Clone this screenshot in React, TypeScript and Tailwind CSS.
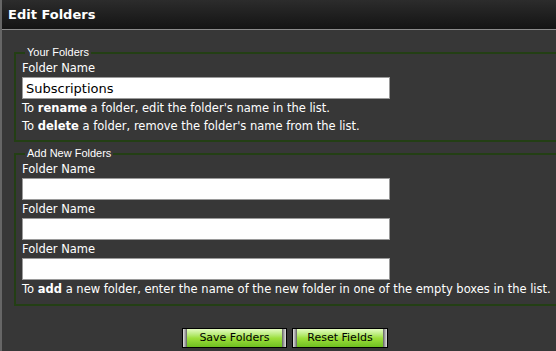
import React from 'react';

const body = { fontFamily: '"DejaVu Sans", Verdana, sans-serif' };
const small = { fontFamily: 'Tahoma, "Liberation Sans", Arial, sans-serif' };

function NameField({ value = '' }: { value?: string }) {
  return (
    <div>
      <div className="h-[18px] leading-[18px] text-[11.5px] text-white">Folder Name</div>
      <input
        defaultValue={value}
        className="block w-[368px] h-[22px] bg-white border border-[#9a9a9a] px-[3px] text-[13px] text-black outline-none"
        style={body}
      />
    </div>
  );
}

function GreenButton({ label, width }: { label: string; width: string }) {
  return (
    <button
      className={`flex h-[20px] ${width} border border-black bg-black p-0`}
      style={body}
    >
      <span className="w-[4px] h-full bg-gradient-to-r from-[#e0e0e0] via-[#a8a8a8] to-[#606060]" />
      <span className="flex-1 h-full flex items-center justify-center text-[11px] text-black bg-gradient-to-b from-[#e4fbc0] via-[#9ee03c] to-[#6fc020]">
        {label}
      </span>
      <span className="w-[4px] h-full bg-gradient-to-r from-[#606060] via-[#a8a8a8] to-[#e0e0e0]" />
    </button>
  );
}

export default function App() {
  return (
    <div className="w-[556px] h-[351px] overflow-hidden bg-[#373737] border-l-2 border-[#666666]" style={body}>
      {/* title bar */}
      <div className="h-[30px] flex items-center px-[6px] bg-gradient-to-b from-[#2c2c2c] to-[#141414] border-b border-[#8c8c8c]">
        <span className="text-[13px] font-bold text-white">Edit Folders</span>
      </div>

      <div className="pl-[12px] mr-[-20px]">
        <fieldset className="mt-[16px] border-2 border-[#233f14] pl-[6px] pb-[5px]">
          <legend className="ml-[3px] px-[2px] text-[11px] leading-[13px] text-white" style={small}>
            Your Folders
          </legend>
          <NameField value="Subscriptions" />
          <p className="text-[11.5px] leading-[18px] text-white">
            To <b>rename</b> a folder, edit the folder's name in the list.
          </p>
          <p className="text-[11.5px] leading-[18px] text-white">
            To <b>delete</b> a folder, remove the folder's name from the list.
          </p>
        </fieldset>

        <fieldset className="mt-[5px] border-2 border-[#233f14] pl-[6px] pb-[6px]">
          <legend className="ml-[3px] px-[2px] text-[11px] leading-[13px] text-white" style={small}>
            Add New Folders
          </legend>
          <NameField />
          <NameField />
          <NameField />
          <p className="text-[11.5px] leading-[18px] text-white">
            To <b>add</b> a new folder, enter the name of the new folder in one of the empty boxes in the list.
          </p>
        </fieldset>
      </div>

      <div className="mt-[22px] pl-[12px] flex justify-center gap-[5px]">
        <GreenButton label="Save Folders" width="w-[105px]" />
        <GreenButton label="Reset Fields" width="w-[96px]" />
      </div>
    </div>
  );
}
